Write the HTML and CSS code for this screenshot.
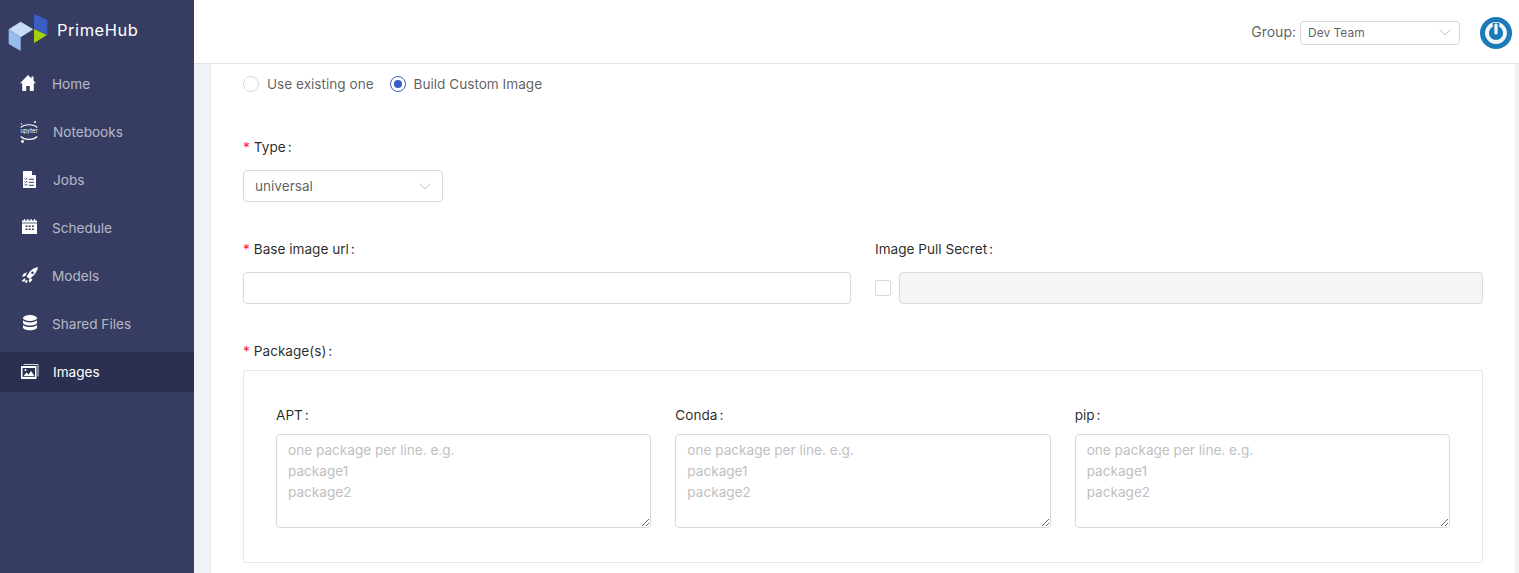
FILE: index.html
```html
<!DOCTYPE html>
<html lang="en">
<head>
<meta charset="utf-8">
<title>PrimeHub</title>
<link rel="stylesheet" href="styles.css">
</head>
<body>
<div class="app">
  <aside class="sidebar">
    <div class="brand">
      <svg class="logo" width="42" height="40" viewBox="8 14 42 40">
        <polygon points="8.700,29.300 20.700,21.700 33.300,29.300 20.700,37.300" fill="#c8dcf7"/>
        <polygon points="8.700,29.300 20.700,37.300 20.700,51 8.700,44" fill="#97bbea"/>
        <polygon points="34,14 47.300,20 47.300,35 34,28.500" fill="#3a5fc4"/>
        <polygon points="34,29 47,35 34,43" fill="#a3d10d"/>
      </svg>
      <span class="brand-name">PrimeHub</span>
    </div>
    <nav class="menu">
      <a class="menu-item">
        <svg class="menu-icon" viewBox="0 0 18 18"><path d="M8 1 0 9.300h2.200V17h4v-5h3.600v5h4V9.300H16l-2.500-2.600V2.500h-2v2.100z" fill="#fff"/></svg>
        <span>Home</span>
      </a>
      <a class="menu-item">
        <svg class="menu-icon" viewBox="0 0 18 18" fill="none">
          <circle cx="15" cy="0" r="1" fill="#fff"/><circle cx="2.500" cy="19.500" r="1.400" fill="#fff"/><circle cx="1.500" cy="2" r=".7" fill="#fff"/>
          <path d="M.8 5.500C4 1.800 14 1.800 17.200 5.500M.8 14.500c3.200 3.700 13.200 3.700 16.400 0" stroke="#fff" stroke-width="1.200"/>
          <text x="9" y="11.400" text-anchor="middle" class="jupyter">upyter</text>
        </svg>
        <span class="shift">Notebooks</span>
      </a>
      <a class="menu-item">
        <svg class="menu-icon" viewBox="0 0 18 18"><path d="M3 1h8.500L16 5.500V18H3z" fill="#fff"/><path d="M12 1v4h4z" fill="#373d62"/><path d="M4.700 8.500l1 1 1.500-1.500M4.700 11.500l1 1 1.500-1.500M4.700 14.500l1 1 1.500-1.500M8.800 9.300h5.200M8.800 12.300h5.200M8.800 15.300h5.200" stroke="#373d62" stroke-width="1" fill="none"/></svg>
        <span class="shift">Jobs</span>
      </a>
      <a class="menu-item">
        <svg class="menu-icon" viewBox="0 0 18 18"><path d="M2 2.500h15V16H2z" fill="#fff"/><path d="M4.500 1v3M7.800 1v3M11.200 1v3M14.500 1v3" stroke="#fff" stroke-width="1.300"/><path d="M2 5h15" stroke="#373d62" stroke-width=".8"/><path d="M5.500 7.500h2V9h-2zM8.700 7.500h2V9h-2zM11.900 7.500h2V9h-2zM5.500 10.500h2V12h-2zM8.700 10.500h2V12h-2zM11.900 10.500h2V12h-2z" fill="#373d62"/></svg>
        <span>Schedule</span>
      </a>
      <a class="menu-item">
        <svg class="menu-icon" viewBox="0 0 18 18"><path d="M18 1c-3.500.6-6.500 2.300-8.500 5l-3 4.500 3 2.500 4-3.500c2.200-2.300 3.800-5 4.500-8.500z" fill="#fff"/><circle cx="12.500" cy="6.700" r="1.300" fill="#373d62"/><path d="M7 6 3 8.200l-.8 3 3.300-1.500zM11 12l1.500 2-3 2.700-.8-2.700zM5 12l-3 2.500.5 1.500 3-1.500zM6.300 14l-1.800 2 1.800 1 1.700-2z" fill="#fff"/></svg>
        <span>Models</span>
      </a>
      <a class="menu-item">
        <svg class="menu-icon" viewBox="0 0 18 18"><ellipse cx="10" cy="4" rx="7" ry="3" fill="#fff"/><path d="M3 6.300v2.500c0 1.500 3.100 2.700 7 2.700s7-1.200 7-2.700V6.300c-1.400 1.400-4 2.100-7 2.100s-5.600-.7-7-2.100zM3 11v2.500c0 1.500 3.100 2.700 7 2.700s7-1.200 7-2.700V11c-1.400 1.400-4 2.100-7 2.100S4.400 12.400 3 11z" fill="#fff"/></svg>
        <span>Shared Files</span>
      </a>
      <a class="menu-item active">
        <svg class="menu-icon" viewBox="0 0 18 18"><path d="M3.500 2.500H18v12" stroke="#fff" stroke-width=".8" fill="none"/><path d="M1 4h15.500v13H1z" fill="#fff"/><path d="M2.500 6h12.500v8.800H2.500z" fill="#2b3050"/><path d="M3.500 14l3-3.500 2 2 2.500-3.500 3.500 5z" fill="#fff"/><circle cx="5.500" cy="8" r="1" fill="#fff"/></svg>
        <span class="shift">Images</span>
      </a>
    </nav>
  </aside>
  <div class="main">
    <header class="topbar">
      <span class="group-label">Group:</span>
      <div class="select select-group">
        <span>Dev Team</span>
        <svg class="chevron" viewBox="0 0 12 7"><path d="M.8.800 6 6 11.200.800" fill="none" stroke="#bfbfbf" stroke-width="1"/></svg>
      </div>
      <div class="avatar">
        <svg width="32" height="32" viewBox="0 0 32 32"><circle cx="16" cy="16" r="16" fill="#1c7ab8"/><circle cx="16" cy="16" r="9" fill="none" stroke="#f3f7fa" stroke-width="3.800"/><path d="M16 6v9" stroke="#1c7ab8" stroke-width="6.500"/><path d="M16 8v8" stroke="#f3f7fa" stroke-width="3.200" stroke-linecap="round"/></svg>
      </div>
    </header>
    <main class="content">
      <section class="card">
        <div class="radios">
          <label class="radio"><i class="dot"></i>Use existing one</label>
          <label class="radio"><i class="dot checked"></i>Build Custom Image</label>
        </div>
        <div class="field field-type">
          <div class="label"><b class="req">*</b>Type<em>:</em></div>
          <div class="select select-type">
            <span>universal</span>
            <svg class="chevron" viewBox="0 0 12 7"><path d="M.8.800 6 6 11.200.800" fill="none" stroke="#bfbfbf" stroke-width="1"/></svg>
          </div>
        </div>
        <div class="two-col">
          <div class="field">
            <div class="label"><b class="req">*</b>Base image url<em>:</em></div>
            <input class="input" type="text">
          </div>
          <div class="field">
            <div class="label">Image Pull Secret<em>:</em></div>
            <div class="secret">
              <i class="check"></i>
              <input class="input input-disabled" type="text" disabled>
            </div>
          </div>
        </div>
        <div class="field field-packages">
          <div class="label"><b class="req">*</b>Package(s)<em>:</em></div>
          <div class="packages">
            <div class="pkg">
              <div class="label">APT<em>:</em></div>
              <textarea class="area" placeholder="one package per line. e.g.&#10;package1&#10;package2"></textarea>
            </div>
            <div class="pkg">
              <div class="label">Conda<em>:</em></div>
              <textarea class="area" placeholder="one package per line. e.g.&#10;package1&#10;package2"></textarea>
            </div>
            <div class="pkg">
              <div class="label">pip<em>:</em></div>
              <textarea class="area" placeholder="one package per line. e.g.&#10;package1&#10;package2"></textarea>
            </div>
          </div>
        </div>
      </section>
    </main>
  </div>
</div>
</body>
</html>
```
FILE: styles.css
```css
* { box-sizing: border-box; }
html, body { margin: 0; height: 100%; overflow: hidden; }
body { font-family: Inter, "Liberation Sans", sans-serif; font-size: 13.6px; color: rgba(0,0,0,.65); background: #f0f2f5; }
.app { display: flex; height: 573px; }
.sidebar { width: 194px; flex: none; background: #373d62; }
.brand { height: 64px; padding: 14px 0 0 8px; display: flex; position: relative; }
.logo { flex: none; }
.brand-name { margin: 2px 0 0 7px; height: 28px; line-height: 28px; color: #fff; font-size: 16.400px; letter-spacing: .6px; }
.menu { display: flex; flex-direction: column; }
.menu-item { height: 40px; margin-bottom: 8px; padding: 0 0 0 20px; display: flex; align-items: center; color: rgba(255,255,255,.65); }
.menu-item.active { background: #2b3050; color: #fff; }
.menu-icon { width: 18px; height: 18px; margin: 0 14px 2px 0; flex: none; overflow: visible; }
.shift { margin-left: 1px; }
.jupyter { font: 5.600px Inter, sans-serif; fill: #fff; }
.main { flex: 1; min-width: 0; display: flex; flex-direction: column; }
.topbar { height: 64px; flex: none; padding: 2px 7px 0 0; background: #fff; border-bottom: 1px solid #e3e3e3; display: flex; align-items: center; justify-content: flex-end; }
.group-label { margin: 0 4px 2px 0; font-size: 14px; }
.select { display: flex; align-items: center; justify-content: space-between; background: #fff; border: 1px solid #d9d9d9; border-radius: 4px; }
.select-group { width: 160px; height: 24px; padding: 0 8px 0 7px; font-size: 12px; margin-right: 20px; }
.select-type { width: 200px; height: 32px; padding: 0 11px; }
.chevron { width: 12px; height: 7px; }
.avatar { width: 32px; height: 32px; }
.content { flex: 1; padding: 0 4px 0 16px; min-height: 0; }
.card { background: #fff; border-left: 1px solid #e8e8e8; height: 100%; padding: 9px 32px 0; }
.radios { display: flex; gap: 16px; height: 22px; align-items: center; }
.radio { display: flex; align-items: center; }
.dot { width: 16px; height: 16px; border: 1px solid #d9d9d9; border-radius: 50%; margin-right: 8px; display: flex; align-items: center; justify-content: center; }
.dot.checked { border-color: #3a5fc4; }
.dot.checked::after { content: ""; width: 8px; height: 8px; border-radius: 50%; background: #3a5fc4; }
.field-type { margin-top: 41px; }
.label { height: 22px; line-height: 22px; margin-bottom: 12px; color: rgba(0,0,0,.85); }
.label em { font-style: normal; margin-left: 2px; }
.req { font-weight: 400; color: #f5222d; margin-right: 4px; }
.two-col { display: grid; grid-template-columns: 1fr 1fr; gap: 24px; margin-top: 36px; }
.input { display: block; width: 100%; height: 32px; border: 1px solid #d9d9d9; border-radius: 4px; background: #fff; }
.input-disabled { background: #f5f5f5; flex: 1; }
.secret { display: flex; align-items: center; gap: 8px; }
.check { width: 16px; height: 16px; flex: none; border: 1px solid #d9d9d9; border-radius: 2px; }
.field-packages { margin-top: 36px; }
.field-packages > .label { margin-bottom: 8px; }
.packages { border: 1px solid #e8e8e8; border-radius: 2px; height: 193px; padding: 33px 32px 0; display: grid; grid-template-columns: repeat(3, 1fr); gap: 24px; }
.pkg .label { margin-bottom: 8px; }
.area { display: block; width: 100%; height: 94px; padding: 5px 11px; border: 1px solid #d9d9d9; border-radius: 4px; font: 13.6px/21px Inter, "Liberation Sans", sans-serif; color: rgba(0,0,0,.65); }
.area::placeholder { color: #bfbfbf; opacity: 1; }
```
